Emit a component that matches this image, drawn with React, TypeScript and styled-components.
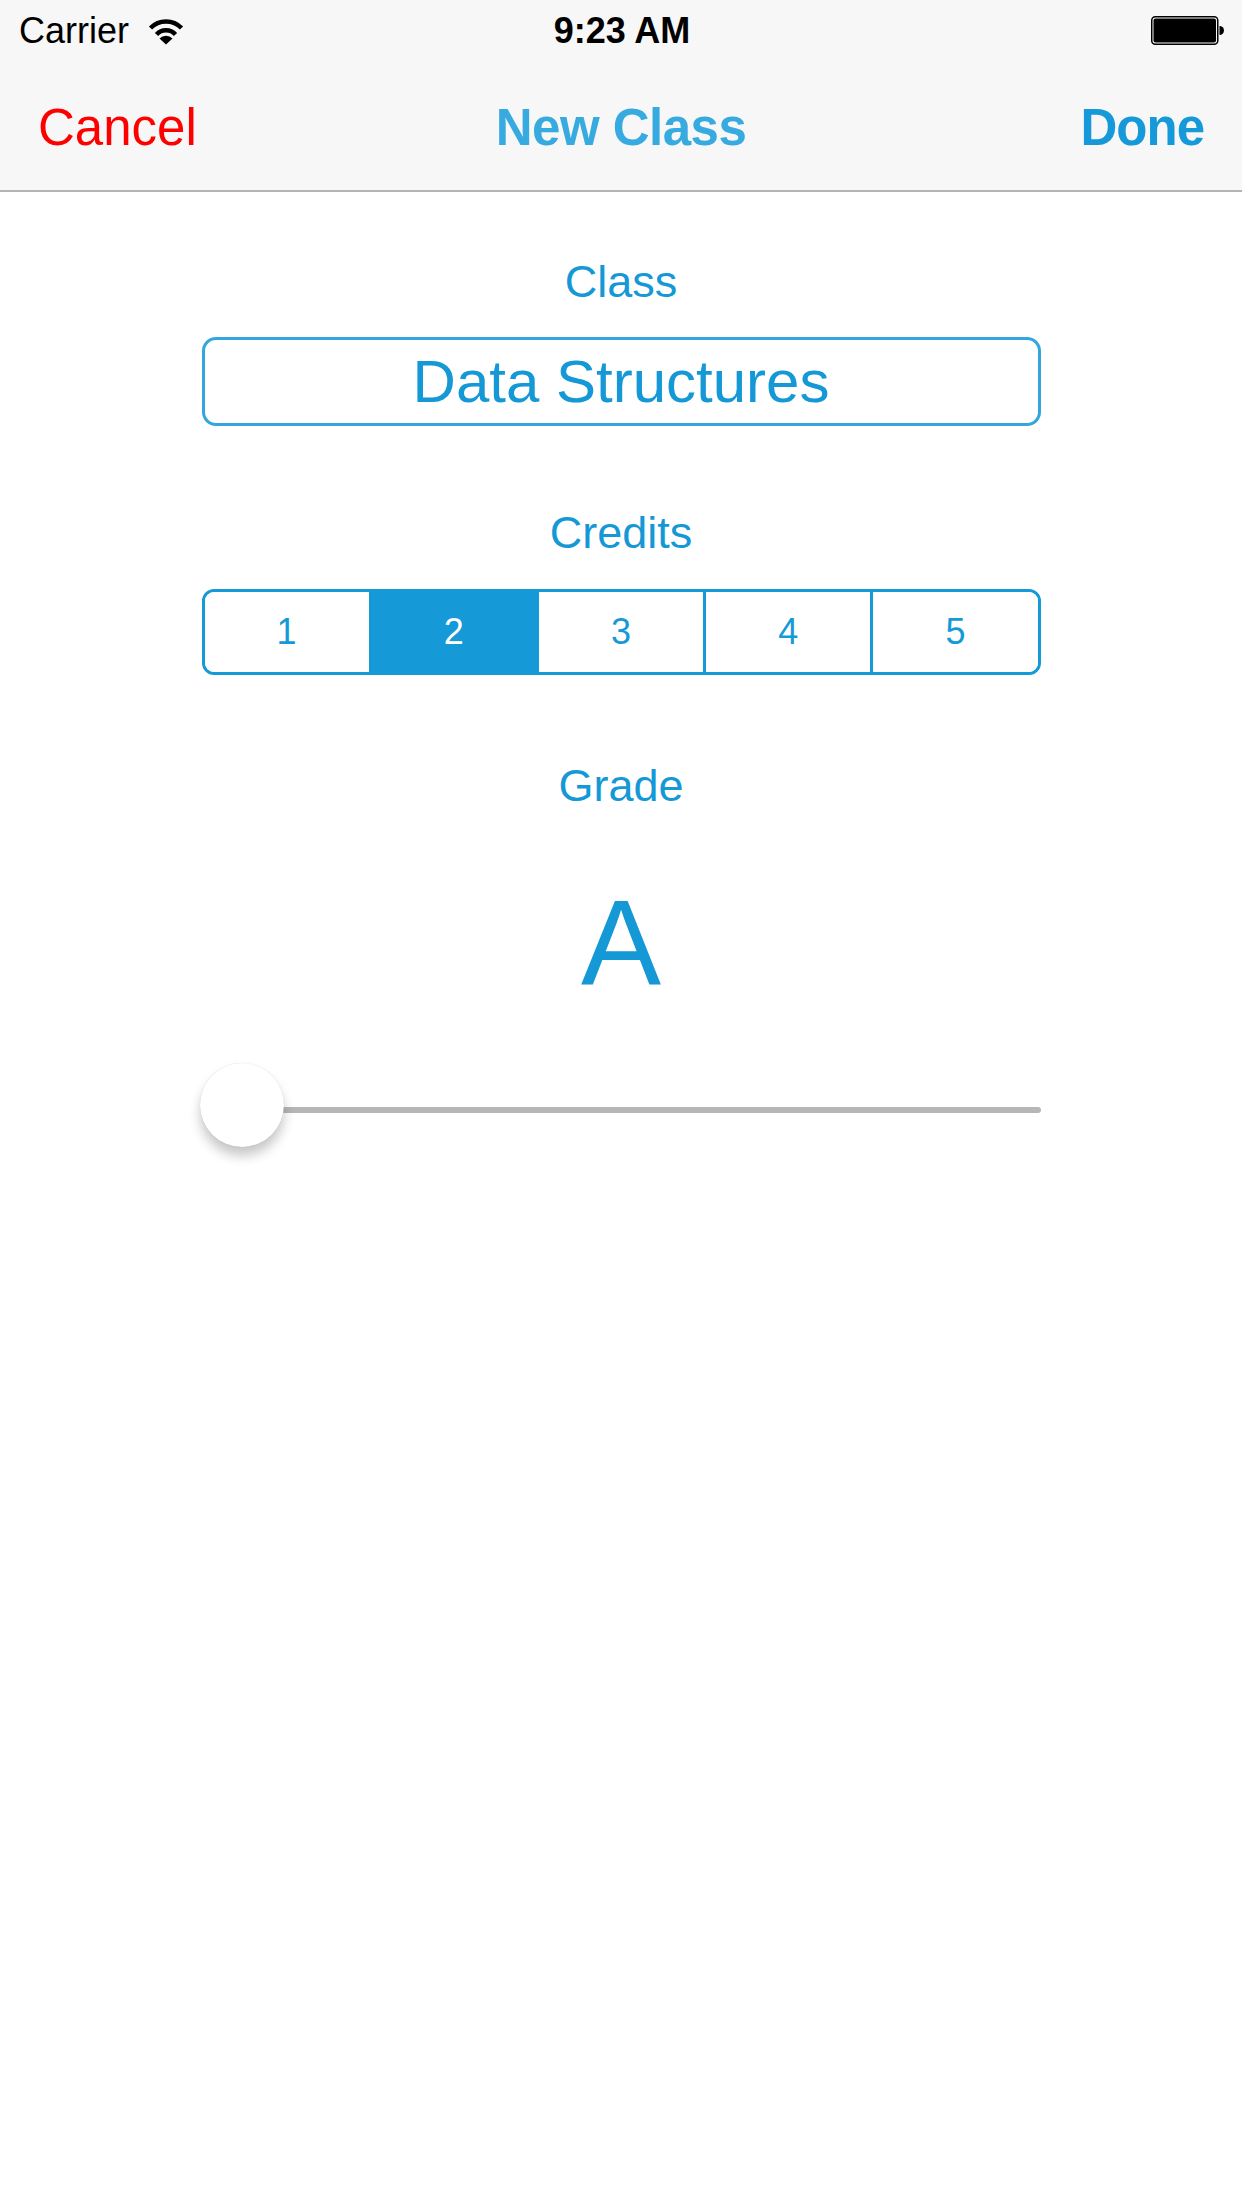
import React, { useState } from "react";
import styled, { createGlobalStyle } from "styled-components";

const GlobalStyle = createGlobalStyle`
  html, body {
    margin: 0;
    padding: 0;
    background: #ffffff;
  }
  body {
    font-family: "Liberation Sans", Arial, sans-serif;
  }
`;

const Screen = styled.div`
  width: 1242px;
  min-height: 2208px;
  background: #ffffff;
  display: flex;
  flex-direction: column;
`;

const Header = styled.header`
  background: #f7f7f7;
  border-bottom: 2px solid #b4b4b4;
`;

const StatusBar = styled.div`
  height: 60px;
  display: grid;
  grid-template-columns: 1fr auto 1fr;
  align-items: center;
  padding: 2px 17px 0 19px;
  box-sizing: border-box;
  color: #000000;
  font-size: 36px;
  line-height: 40px;
`;

const StatusLeft = styled.div`
  display: flex;
  align-items: center;
  gap: 19px;
`;

const Time = styled.div`
  font-weight: 700;
`;

const StatusRight = styled.div`
  display: flex;
  justify-content: flex-end;
  align-items: center;
`;

const NavBar = styled.nav`
  height: 130px;
  box-sizing: border-box;
  padding: 5px 38px 0;
  display: grid;
  grid-template-columns: 1fr auto 1fr;
  align-items: center;
  font-size: 51px;
  line-height: 51px;
`;

const NavButton = styled.button<{ $tone: "red" | "blue"; $align: "left" | "right" }>`
  background: none;
  border: none;
  padding: 0;
  font: inherit;
  cursor: pointer;
  justify-self: ${(p) => (p.$align === "left" ? "start" : "end")};
  color: ${(p) => (p.$tone === "red" ? "#ff0000" : "#1599d8")};
  font-weight: ${(p) => (p.$tone === "red" ? 400 : 700)};
  letter-spacing: ${(p) => (p.$tone === "red" ? "0" : "-1px")};
`;

const Title = styled.h1`
  margin: 0;
  font-size: 51px;
  font-weight: 700;
  letter-spacing: -0.5px;
  color: #37aadf;
`;

const Form = styled.main`
  width: 839px;
  margin: 0 auto;
  padding-top: 63px;
  display: flex;
  flex-direction: column;
  align-items: stretch;
`;

const Label = styled.div<{ $gapTop: number }>`
  margin-top: ${(p) => p.$gapTop}px;
  text-align: center;
  font-size: 45px;
  line-height: 54px;
  color: #1598d6;
`;

const TextField = styled.input`
  margin-top: 28px;
  height: 89px;
  box-sizing: border-box;
  border: 3px solid #33a7dd;
  border-radius: 14px;
  background: #ffffff;
  text-align: center;
  font-family: "Liberation Sans", Arial, sans-serif;
  font-size: 60px;
  color: #1598d6;
  outline: none;
  padding: 0 20px;
`;

const Segmented = styled.div`
  margin-top: 29px;
  height: 86px;
  box-sizing: border-box;
  border: 3px solid #1699d7;
  border-radius: 12px;
  overflow: hidden;
  display: flex;
`;

const Segment = styled.button<{ $selected: boolean }>`
  flex: 1;
  border: none;
  border-left: 3px solid #1699d7;
  margin: 0;
  padding: 0;
  background: ${(p) => (p.$selected ? "#1699d7" : "#ffffff")};
  color: ${(p) => (p.$selected ? "#ffffff" : "#1699d7")};
  font-family: "Liberation Sans", Arial, sans-serif;
  font-size: 36px;
  cursor: pointer;

  &:first-child {
    border-left: none;
  }
`;

const GradeValue = styled.div`
  margin-top: 69px;
  text-align: center;
  font-size: 120px;
  line-height: 120px;
  color: #1598d6;
`;

const Slider = styled.div`
  position: relative;
  margin-top: 61px;
  height: 84px;
`;

const Track = styled.div`
  position: absolute;
  left: 0;
  right: 0;
  top: 44px;
  height: 6px;
  border-radius: 3px;
  background: #b6b6b6;
`;

const Thumb = styled.div`
  position: absolute;
  left: -2px;
  top: 0;
  width: 84px;
  height: 84px;
  border-radius: 50%;
  background: #ffffff;
  box-shadow: 0 0 1px rgba(0, 0, 0, 0.18), 0 9px 12px rgba(0, 0, 0, 0.22);
`;

const Wifi = () => (
  <svg width="36" height="27" viewBox="0 0 36 27">
    <path d="M2.5 10 A21.5 21.5 0 0 1 33.5 10" fill="none" stroke="#000" strokeWidth="4.5" />
    <path d="M8.5 16.5 A13 13 0 0 1 27.5 16.5" fill="none" stroke="#000" strokeWidth="4.5" />
    <path d="M18 26.5 L11.5 20.5 A9 9 0 0 1 24.5 20.5 Z" fill="#000" />
  </svg>
);

const Battery = () => (
  <svg width="74" height="30" viewBox="0 0 74 30">
    <rect x="0.75" y="0.75" width="66" height="27.5" rx="3.5" fill="none" stroke="#000" strokeWidth="1.5" />
    <rect x="2.5" y="2.5" width="62.5" height="24" rx="2" fill="#000" />
    <path d="M68.5 10 A4.5 4.5 0 0 1 68.5 19 Z" fill="#000" />
  </svg>
);

export default function App() {
  const [name, setName] = useState("Data Structures");
  const [credits, setCredits] = useState(2);

  return (
    <Screen>
      <GlobalStyle />
      <Header>
        <StatusBar>
          <StatusLeft>
            <span>Carrier</span>
            <Wifi />
          </StatusLeft>
          <Time>9:23 AM</Time>
          <StatusRight>
            <Battery />
          </StatusRight>
        </StatusBar>
        <NavBar>
          <NavButton $tone="red" $align="left">Cancel</NavButton>
          <Title>New Class</Title>
          <NavButton $tone="blue" $align="right">Done</NavButton>
        </NavBar>
      </Header>
      <Form>
        <Label $gapTop={0}>Class</Label>
        <TextField value={name} onChange={(e) => setName(e.target.value)} />
        <Label $gapTop={80}>Credits</Label>
        <Segmented>
          {[1, 2, 3, 4, 5].map((n) => (
            <Segment key={n} $selected={n === credits} onClick={() => setCredits(n)}>
              {n}
            </Segment>
          ))}
        </Segmented>
        <Label $gapTop={84}>Grade</Label>
        <GradeValue>A</GradeValue>
        <Slider>
          <Track />
          <Thumb />
        </Slider>
      </Form>
    </Screen>
  );
}
